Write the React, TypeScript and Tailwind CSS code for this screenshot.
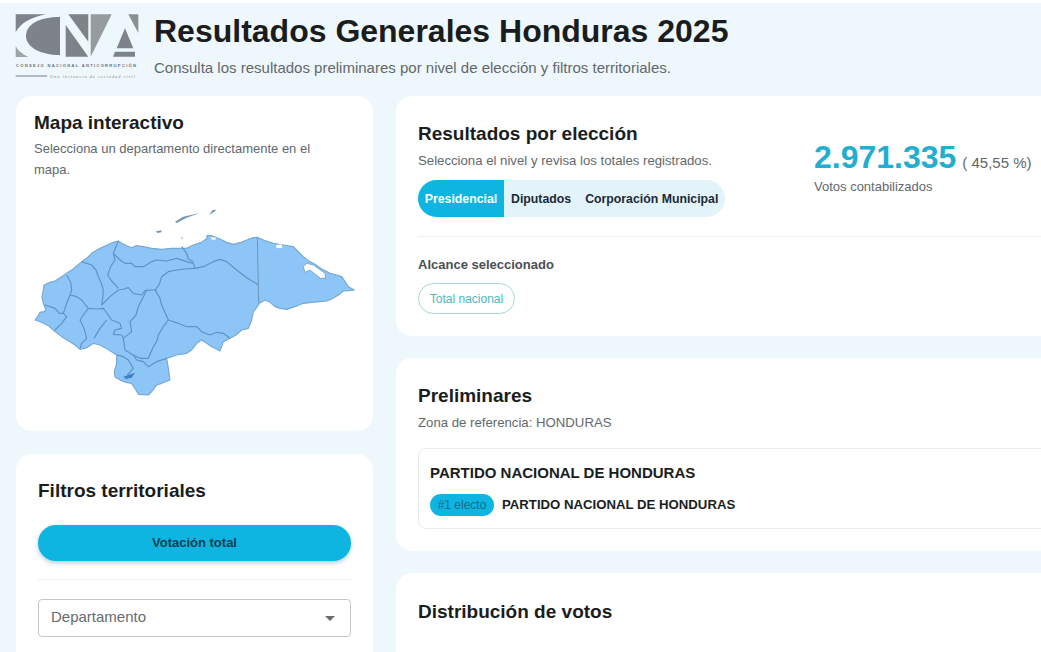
const pts = (s: string) => "M" + s.trim().split(/\s+/).join(" L");
const outline = pts("45,375 55,362 60,352 72,350 78,345 70,325 66,305 70,285 72,270 90,262 105,258 125,245 140,235 160,222 185,200 200,190 215,175 240,160 262,150 280,142 295,138 305,145 320,152 335,158 348,152 370,155 395,160 425,163 455,160 482,160 500,160 520,150 545,142 562,130 560,122 575,122 590,128 600,132 620,142 640,148 660,143 680,135 700,128 712,127 730,135 760,145 790,150 820,155 835,170 850,185 865,197 885,208 905,222 930,235 950,240 965,245 975,260 985,275 1003,285 985,287 970,288 955,300 935,312 920,318 900,320 875,322 850,325 825,335 800,343 780,340 765,335 750,322 735,315 718,325 708,340 700,350 695,375 685,400 665,405 648,420 630,430 610,440 600,468 590,462 575,455 560,445 545,435 530,445 515,465 500,475 470,480 440,490 445,520 450,555 425,565 410,570 395,590 385,600 355,598 345,580 335,565 318,562 300,555 285,545 283,530 290,505 290,480 275,470 262,462 240,450 220,445 200,458 180,463 165,450 150,440 125,425 100,405 85,392 70,385 55,378") + " Z";
const lines = [
  "295,138 288,155 280,175 285,195 272,215 263,240 275,258 295,280",
  "185,200 215,210 228,225 235,245 245,268 250,285 248,310 245,330",
  "295,285 270,305 245,330",
  "140,240 152,262 155,285 150,300 140,325 130,355 118,355 105,340 90,335 75,330",
  "150,300 170,305 185,315 205,340 230,342 250,340 265,360 275,375 300,385 305,400 285,405 280,418 305,420 310,430",
  "295,285 312,282 325,278 340,295 365,300 375,287 395,285 410,285",
  "280,175 300,195 315,205 335,205 345,215 370,215 395,200 410,195 440,198 470,190 500,200 520,205 525,220",
  "485,155 500,175 505,192 520,200",
  "525,220 550,215 580,200 600,193 620,200 650,225 680,248 716,270",
  "525,220 495,222 470,225 445,230 425,245 418,268 405,285 420,310 425,330 445,375 430,395 415,420 410,440 400,455 385,490 360,490 340,480 315,465 310,430 335,410 330,380 348,360 355,335 370,305 380,285",
  "445,375 475,385 500,395 530,395 545,410 570,420 590,412 610,415 630,430",
  "340,480 350,495 370,500 385,515 410,500 440,490",
  "290,480 310,485 325,495 340,520 322,540",
  "205,340 190,360 180,375 190,395 195,410 200,430 185,445 180,460",
  "130,355 140,365 125,385 105,405",
  "260,375 240,400 222,430",
].map(pts);

function Logo() {
  return (
    <svg width="126" height="66" viewBox="0 0 126 66" className="shrink-0">
      <path d="M0.7,0.3 H31 C16,3 6,9 0.7,18 Z" fill="#7d8388" />
      <path d="M0.7,32 C3,37 8,40 13,43 H0.7 Z" fill="#9ea3a7" />
      <path d="M45,3 C25,3 11,10 11,22 C11,33 25,41 45,41 Z" fill="#7d8388" />
      <path d="M50.7,11 L73.3,42.7 H50.7 Z" fill="#7d8388" />
      <path d="M53.3,0.3 H73.3 V27.7 Z" fill="#7d8388" />
      <path d="M75.7,0.3 H96.7 L75.7,42.7 Z" fill="#969b9f" />
      <path d="M100,37.7 H120 V42.7 H98 Z" fill="#7d8388" />
      <path d="M110,14.3 L118.3,34.3 H101.7 Z" fill="#7d8388" />
      <path d="M113.3,0.3 H123.3 V19 Z" fill="#8a8f93" />
      <text x="1" y="52.5" fontSize="4.1" fontWeight="700" fill="#6a7075" fontFamily="Liberation Sans, sans-serif" textLength="120">CONSEJO NACIONAL ANTICORRUPCIÓN</text>
      <path d="M0.7,62 H32" stroke="#767c81" strokeWidth="1" />
      <text x="35" y="63.5" fontSize="4.2" fontStyle="italic" fill="#7d8388" fontFamily="Liberation Serif, serif" textLength="85">Una instancia de sociedad civil</text>
    </svg>
  );
}

function HondurasMap() {
  return (
    <svg width="345" height="210" viewBox="0 0 1035 630" className="block">
      <g fill="#6f97b5">
        <path d="M465,80 L490,65 L540,54 L500,68 L470,84 Z" />
        <path d="M567,60 L578,45 L590,44 L580,52 Z" />
        <path d="M408,109 L425,106 L424,112 L412,114 Z" />
        <path d="M483,130 L488,126 L487,133 Z" />
      </g>
      <path d={outline} fill="#8ec5f7" stroke="#76a8d2" strokeWidth="3.5" strokeLinejoin="round" />
      <g fill="none" stroke="#5c93c4" strokeWidth="3.5" strokeLinejoin="round">
        {lines.map((d) => <path key={d} d={d} />)}
      </g>
      <path d="M712,127 L716,325" fill="none" stroke="#6a96bb" strokeWidth="3" />
      <path d="M850,215 L860,205 L880,210 L915,235 L917,250 L902,250 L870,225 L855,232 Z" fill="#fff" stroke="#5f93bd" strokeWidth="2" />
      <path d="M768,150 L785,148 L787,158 L770,160 Z" fill="#fff" />
      <path d="M573,127 L588,128 L585,135 L574,133 Z" fill="#fff" />
      <path d="M310,545 L345,533 L335,548 L318,552 Z" fill="#3f80c0" />
    </svg>
  );
}

export default function App() {
  return (
    <div className="h-[652px] w-[1041px] overflow-hidden bg-[#eef7fb] font-['Liberation_Sans',Arial,sans-serif]">
      <div className="h-[3px] bg-white" />
      <header className="flex h-[93px] items-start gap-[13px] pl-[15px] pt-[11px]">
        <Logo />
        <div>
          <h1 className="text-[32px] font-bold leading-[34px] text-[#1a1d20]">Resultados Generales Honduras 2025</h1>
          <p className="mt-[11px] text-[15px] leading-[18px] text-[#62686d]">Consulta los resultados preliminares por nivel de elección y filtros territoriales.</p>
        </div>
      </header>

      <div className="flex items-start gap-[23px] pl-4">
        <aside className="flex w-[357px] shrink-0 flex-col gap-[23px]">
          <section className="h-[335px] rounded-2xl bg-white pl-[18px] pt-[15px]">
            <h2 className="text-[19px] font-bold leading-[24px] text-[#1a1d20]">Mapa interactivo</h2>
            <p className="mt-[3px] w-[300px] text-[13px] leading-[21px] text-[#62686d]">Selecciona un departamento directamente en el mapa.</p>
            <div className="-ml-[14px] mt-[15px]"><HondurasMap /></div>
          </section>
          <section className="h-[300px] rounded-2xl bg-white px-[22px] pt-[25px]">
            <h2 className="text-[19px] font-bold leading-[24px] text-[#1a1d20]">Filtros territoriales</h2>
            <div className="mt-[22px] flex h-9 items-center justify-center rounded-full bg-[#0db5e0] text-[13px] font-bold text-[#103c55] shadow-[0_2px_4px_rgba(13,120,160,0.35)]">Votación total</div>
            <div className="mt-[18px] border-t border-[#eceff1]" />
            <div className="mt-[19px] flex h-[38px] items-center justify-between rounded border border-[#c4c8cc] pl-3 pr-[15px] text-[15px] text-[#666b70]">
              <span className="-mt-[2px]">Departamento</span>
              <span className="h-0 w-0 border-x-[5px] border-t-[5px] border-x-transparent border-t-[#666b70]" />
            </div>
          </section>
        </aside>

        <main className="flex w-[660px] shrink-0 flex-col gap-[22px]">
          <section className="h-[240px] rounded-2xl bg-white pl-[22px] pr-0 pt-[26px]">
            <div className="flex h-[115px] items-start border-b border-[#eceff1]">
              <div className="w-[396px]">
                <h2 className="text-[19px] font-bold leading-[24px] text-[#1a1d20]">Resultados por elección</h2>
                <p className="mt-[7px] text-[13.2px] leading-[16px] text-[#62686d]">Selecciona el nivel y revisa los totales registrados.</p>
                <div className="mt-[11px] flex h-[37px] w-[307px] items-center overflow-hidden rounded-full bg-[#e2f3f9] pt-[1px] text-[12.3px] font-bold text-[#1b2a35]">
                  <span className="-mt-[1px] flex h-[37px] w-[86px] items-center justify-center bg-[#0db5e0] pt-[1px] text-white">Presidencial</span>
                  <span className="ml-[7px]">Diputados</span>
                  <span className="ml-[14px]">Corporación Municipal</span>
                </div>
              </div>
              <div className="mt-[13px]">
                <div className="flex items-baseline gap-[6px]">
                  <span className="text-[32px] font-bold leading-[44px] text-[#22aed1]">2.971.335</span>
                  <span className="text-[15px] text-[#62686d]">( 45,55 %)</span>
                </div>
                <div className="text-[13px] leading-[16px] text-[#62686d]">Votos contabilizados</div>
              </div>
            </div>
            <h3 className="mt-[20px] text-[13px] font-bold leading-[16px] text-[#4a4f54]">Alcance seleccionado</h3>
            <span className="mt-[10px] flex h-[31px] w-[97px] items-center justify-center rounded-full border border-[#a9d6d8] text-xs text-[#4db6bd]">Total nacional</span>
          </section>

          <section className="h-[193px] rounded-2xl bg-white pl-[22px] pt-[26px]">
            <h2 className="text-[19px] font-bold leading-[24px] text-[#1a1d20]">Preliminares</h2>
            <p className="mt-[7px] text-[13.2px] leading-[16px] text-[#62686d]">Zona de referencia: HONDURAS</p>
            <div className="mt-[17px] h-[81px] rounded-lg border border-[#e8ecee] pl-[11px] pt-[14px]">
              <div className="text-[15px] font-bold leading-[20px] text-[#1a1d20]">PARTIDO NACIONAL DE HONDURAS</div>
              <div className="mt-[11px] flex items-center gap-2">
                <span className="flex h-[22px] w-[64px] items-center justify-center rounded-full bg-[#0db5e0] text-xs text-[#1a6a8a]">#1 electo</span>
                <span className="text-[13.2px] font-bold text-[#1a1d20]">PARTIDO NACIONAL DE HONDURAS</span>
              </div>
            </div>
          </section>

          <section className="h-[100px] rounded-2xl bg-white pl-[22px] pt-[27px]">
            <h2 className="text-[19px] font-bold leading-[24px] text-[#1a1d20]">Distribución de votos</h2>
          </section>
        </main>
      </div>
    </div>
  );
}
